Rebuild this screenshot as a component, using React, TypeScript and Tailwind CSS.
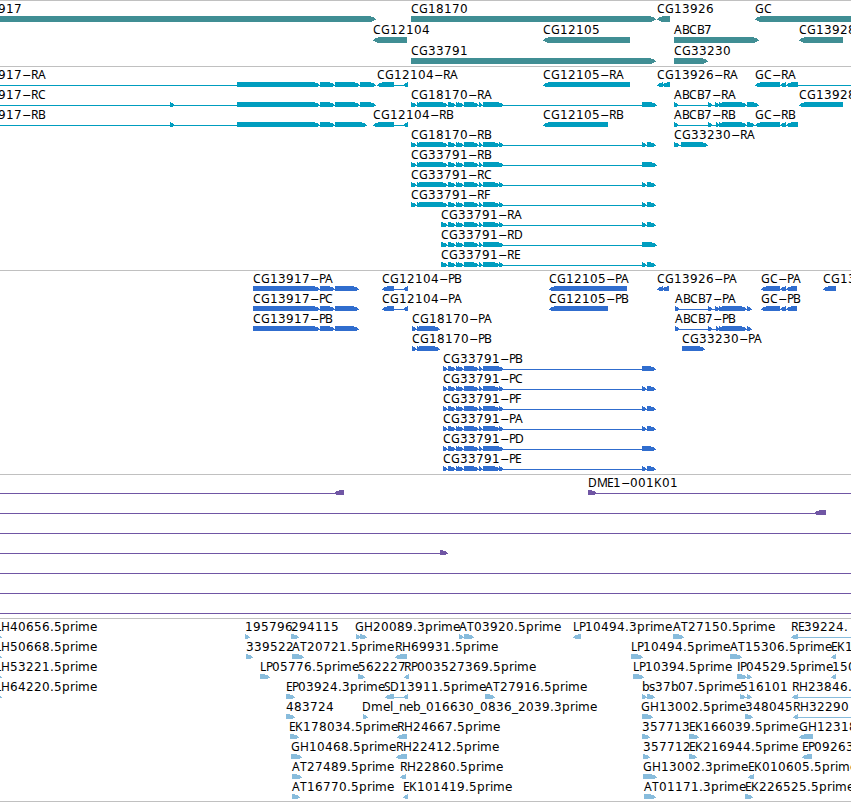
type Segment = [number, number];

type Feature = {
  label: string;
  dir: "left" | "right";
  segments: Segment[];
  x: number;
};

type TrackData = {
  name: string;
  color: string;
  rowClass: string;
  padClass: string;
  rows: Feature[][];
};

// how far each of the six pixel rows of a bar stays back from its tip
const TIP_INSETS = [5, 2, 1, 0, 2, 4];

// pixel advances of the label face
const ADVANCES: Record<string, number> = {
  A: 8, B: 7, C: 8, D: 9, E: 6, F: 6, G: 9, H: 9, I: 3, K: 8, L: 6, M: 10,
  P: 6, R: 7, S: 6, T: 7, b: 7, e: 7, i: 3, l: 3, m: 12, n: 7, p: 8, r: 5,
  s: 6, ".": 4, _: 6, "-": 9,
};

const right = (label: string, segments: Segment[], x = segments[0][0]): Feature => ({
  label,
  dir: "right",
  segments,
  x,
});

const left = (label: string, segments: Segment[], x = segments[0][0]): Feature => ({
  label,
  dir: "left",
  segments,
  x,
});

const OFF_LEFT: Segment = [-35, -25];
const OFF_RIGHT: Segment = [860, 870];

const head: Segment[] = [[411, 417], [417, 421], [419, 448]];
const middle: Segment[] = [[448, 456], [456, 461], [458, 464], [464, 479], [479, 483]];
const longEnd: Segment[] = [[483, 504], [642, 657]];
const splitEnd: Segment[] = [[483, 500], [499, 504], [642, 647], [647, 656]];
const cg13917: Segment[] = [[237, 320], [320, 335]];
const abcb7: Segment[] = [[719, 724], [722, 747]];
const gcTail: Segment[] = [[780, 786], [786, 798]];

const utr = (label: string, end: Segment[]) => right(label, [...head, ...middle, ...end]);
const short = (label: string, end: Segment[], x = 441) =>
  right(label, [[x, 448], ...middle, ...end]);

const tracks: TrackData[] = [
  {
    name: "genes",
    color: "#408e94",
    rowClass: "h-[21px]",
    padClass: "pb-[2px]",
    rows: [
      [
        right("CG13917", [[-35, 376]]),
        right("CG18170", [[411, 656]]),
        left("CG13926", [[657, 670]]),
        left("GC", [[755, 870]]),
      ],
      [
        left("CG12104", [[373, 407]]),
        left("CG12105", [[543, 630]]),
        right("ABCB7", [[674, 759]]),
        left("CG13928", [[799, 843]]),
      ],
      [right("CG33791", [[411, 656]]), right("CG33230", [[674, 708]])],
    ],
  },
  {
    name: "transcripts",
    color: "#009dbf",
    rowClass: "h-5",
    padClass: "pb-[3px]",
    rows: [
      [
        right("CG13917-RA", [OFF_LEFT, ...cg13917, [335, 360], [360, 376]]),
        left("CG12104-RA", [[377, 394], [403, 408]]),
        left("CG12105-RA", [[543, 630]]),
        left("CG13926-RA", [[657, 663], [662, 670]]),
        left("GC-RA", [[755, 780], ...gcTail, OFF_RIGHT]),
      ],
      [
        right("CG13917-RC", [OFF_LEFT, [170, 175], ...cg13917, [335, 360], [360, 376]]),
        utr("CG18170-RA", longEnd),
        right("ABCB7-RA", [[674, 679], [708, 713], [715, 720], ...abcb7, [747, 759]]),
        left("CG13928-RA", [[799, 843]]),
      ],
      [
        right("CG13917-RB", [OFF_LEFT, [170, 175], ...cg13917, [335, 367]]),
        left("CG12104-RB", [[373, 394], [403, 408]]),
        left("CG12105-RB", [[543, 608]]),
        right("ABCB7-RB", [[674, 679], [708, 713], [716, 720], ...abcb7, [747, 755]]),
        left("GC-RB", [[755, 780], ...gcTail]),
      ],
      [utr("CG18170-RB", splitEnd), right("CG33230-RA", [[674, 680], [681, 708]])],
      [utr("CG33791-RB", longEnd)],
      [utr("CG33791-RC", splitEnd)],
      [utr("CG33791-RF", splitEnd)],
      [short("CG33791-RA", splitEnd)],
      [short("CG33791-RD", longEnd)],
      [short("CG33791-RE", splitEnd)],
    ],
  },
  {
    name: "proteins",
    color: "#306dce",
    rowClass: "h-5",
    padClass: "pb-[3px]",
    rows: [
      [
        right("CG13917-PA", [[253, 320], [320, 335], [335, 359]]),
        left("CG12104-PB", [[382, 394], [403, 408]]),
        left("CG12105-PA", [[549, 627]]),
        left("CG13926-PA", [[657, 663], [662, 669]]),
        left("GC-PA", [[761, 780], [780, 786], [786, 797]]),
        left("CG13928-PA", [[823, 836]]),
      ],
      [
        right("CG13917-PC", [[253, 320], [320, 335], [335, 359]]),
        left("CG12104-PA", [[382, 394], [403, 408]]),
        left("CG12105-PB", [[549, 608]]),
        right("ABCB7-PA", [[675, 680], [708, 713], [715, 720], ...abcb7, [747, 752]]),
        left("GC-PB", [[761, 780], [780, 786], [786, 797]]),
      ],
      [
        right("CG13917-PB", [[253, 320], [320, 335], [335, 359]]),
        right("CG18170-PA", [[412, 417], [417, 421], [419, 440]]),
        right("ABCB7-PB", [[675, 680], [708, 713], [716, 720], ...abcb7, [747, 752]]),
      ],
      [
        right("CG18170-PB", [[412, 417], [417, 421], [419, 440]]),
        right("CG33230-PA", [[682, 705]]),
      ],
      [short("CG33791-PB", [[483, 504], [642, 656]], 443)],
      [short("CG33791-PC", splitEnd, 443)],
      [short("CG33791-PF", splitEnd, 443)],
      [short("CG33791-PA", splitEnd, 443)],
      [short("CG33791-PD", [[483, 504], [642, 656]], 443)],
      [short("CG33791-PE", splitEnd, 443)],
    ],
  },
  {
    name: "clones",
    color: "#7056a4",
    rowClass: "h-5",
    padClass: "pb-[3px]",
    rows: [
      [left("", [OFF_LEFT, [334, 344]]), right("DME1-001K01", [[588, 597], OFF_RIGHT])],
      [left("", [OFF_LEFT, [814, 826]])],
      [right("", [OFF_LEFT, OFF_RIGHT])],
      [right("", [OFF_LEFT, [440, 448]])],
      [right("", [OFF_LEFT, OFF_RIGHT])],
      [right("", [OFF_LEFT, OFF_RIGHT])],
      [right("", [OFF_LEFT, OFF_RIGHT])],
    ],
  },
  {
    name: "ests",
    color: "#88bcdc",
    rowClass: "h-5",
    padClass: "pb-[2px]",
    rows: [
      [
        right("LH40656.5prime", [[-5, 2]]),
        right("195796", [[245, 250]]),
        right("294115", [[291, 299]]),
        right("GH20089.3prime", [[356, 361], [360, 367]], 355),
        right("AT03920.5prime", [[459, 464], [464, 474]]),
        left("LP10494.3prime", [[573, 581]]),
        right("AT27150.5prime", [[673, 684]]),
        left("RE39224.", [[791, 798], OFF_RIGHT]),
      ],
      [
        right("LH50668.5prime", [[-5, 2]]),
        right("339522", [[246, 253]]),
        right("AT20721.5prime", [[292, 304]]),
        left("RH69931.5prime", [[395, 407]]),
        right("LP10494.5prime", [[631, 643]]),
        right("AT15306.5prime", [[730, 742]]),
        left("EK1", [[831, 836]]),
      ],
      [
        right("LH53221.5prime", [[-5, 2]]),
        right("LP05776.5prime", [[260, 270]]),
        right("562227", [[358, 365]]),
        left("RP003527369.5prime", [[404, 409]]),
        right("LP10394.5prime", [[633, 644]]),
        right("IP04529.5prime", [[737, 747], [747, 752]]),
        left("150", [[831, 836]], 832),
      ],
      [
        right("LH64220.5prime", [[-5, 2]]),
        right("EP03924.3prime", [[286, 295]]),
        left("SD13911.5prime", [[385, 394], [403, 408]], 384),
        right("AT27916.5prime", [[485, 495]]),
        right("bs37b07.5prime", [[642, 647], [647, 655]]),
        right("516101", [[740, 746], [747, 752]]),
        left("RH23846.", [[792, 798], OFF_RIGHT]),
      ],
      [
        right("483724", [[286, 295]]),
        right("Dmel_neb_016630_0836_2039.3prime", [[363, 368]], 362),
        right("GH13002.5prime", [[642, 653]], 641),
        right("348045", [[745, 753]]),
        left("RH32290", [[793, 798], OFF_RIGHT]),
      ],
      [
        right("EK178034.5prime", [[290, 299]], 289),
        left("RH24667.5prime", [[397, 407]]),
        right("357713", [[642, 650]]),
        right("EK166039.5prime", [[689, 699]]),
        left("GH12318", [[799, 813]]),
      ],
      [
        right("GH10468.5prime", [[291, 302]]),
        left("RH22412.5prime", [[396, 407]]),
        right("357712", [[643, 650]]),
        right("EK216944.5prime", [[689, 697]]),
        left("EP09263", [[802, 812]]),
      ],
      [
        right("AT27489.5prime", [[292, 302]]),
        left("RH22860.5prime", [[400, 406]]),
        right("GH13002.3prime", [[643, 657]]),
        left("EK010605.5prime", [[748, 754]]),
      ],
      [
        right("AT16770.5prime", [[292, 300]]),
        left("EK101419.5prime", [[403, 408]]),
        right("AT01171.3prime", [[644, 656]]),
        right("EK226525.5prime", [[745, 753]]),
      ],
    ],
  },
];

// capitals are set in the narrower face, everything else in the wider one
function Runs({ text, stops }: { text: string; stops: number[] }) {
  let index = 0;
  return (
    <text y={12}>
      {(text.match(/[A-HJ-Z]+|[^A-HJ-Z]+/g) ?? []).map((run) => {
        const from = index;
        index += run.length;
        return (
          <tspan
            key={from}
            x={stops.slice(from, index).join(" ")}
            className={/[A-HJ-Z]/.test(run) ? "font-['Noto_Sans',sans-serif]" : undefined}
          >
            {run}
          </tspan>
        );
      })}
    </text>
  );
}

function Label({ text, x }: { text: string; x: number }) {
  let cursor = x;
  const stops = text.split("").map((ch) => {
    const at = cursor;
    cursor += ADVANCES[ch] ?? 8;
    return at;
  });
  const dash = text.indexOf("-");

  if (dash < 0) return <Runs text={text} stops={stops} />;

  // the hyphen is drawn wide
  return (
    <g>
      <Runs text={text.slice(0, dash)} stops={stops.slice(0, dash)} />
      <text transform={`translate(${stops[dash]} 12) scale(2.2 1)`}>-</text>
      <Runs text={text.slice(dash + 1)} stops={stops.slice(dash + 1)} />
    </g>
  );
}

function Arrow({ segment: [a, b], dir }: { segment: Segment; dir: Feature["dir"] }) {
  const width = b - a;
  const d = TIP_INSETS.map((inset, row) => {
    const length = width - Math.min(inset, width - 1);
    const start = dir === "right" ? a : b - length;
    return `M${start} ${15 + row}h${length}v1h${-length}z`;
  }).join("");
  return <path d={d} />;
}

function FeatureGlyph({ feature, color }: { feature: Feature; color: string }) {
  const { segments, dir, label, x } = feature;
  const start = segments[0][0];
  const end = segments[segments.length - 1][1];
  return (
    <g>
      <g fill={color} shapeRendering="crispEdges">
        {segments.length > 1 && <rect x={start} y={18} width={end - start} height={1} />}
        {segments.map((segment, i) => (
          <Arrow key={i} segment={segment} dir={dir} />
        ))}
      </g>
      {label && <Label text={label} x={x} />}
    </g>
  );
}

function Track({ track }: { track: TrackData }) {
  return (
    <section className={`border-t border-[#c0c0c0] ${track.padClass}`}>
      {track.rows.map((row, i) => (
        <svg
          key={i}
          className={`block w-full fill-black font-['DejaVu_Sans',sans-serif] text-[12px] ${track.rowClass}`}
        >
          {row.map((feature, j) => (
            <FeatureGlyph key={j} feature={feature} color={track.color} />
          ))}
        </svg>
      ))}
    </section>
  );
}

export default function App() {
  return (
    <main className="h-[802px] w-[851px] overflow-hidden border-b border-[#c0c0c0] bg-white">
      {tracks.map((track) => (
        <Track key={track.name} track={track} />
      ))}
    </main>
  );
}
